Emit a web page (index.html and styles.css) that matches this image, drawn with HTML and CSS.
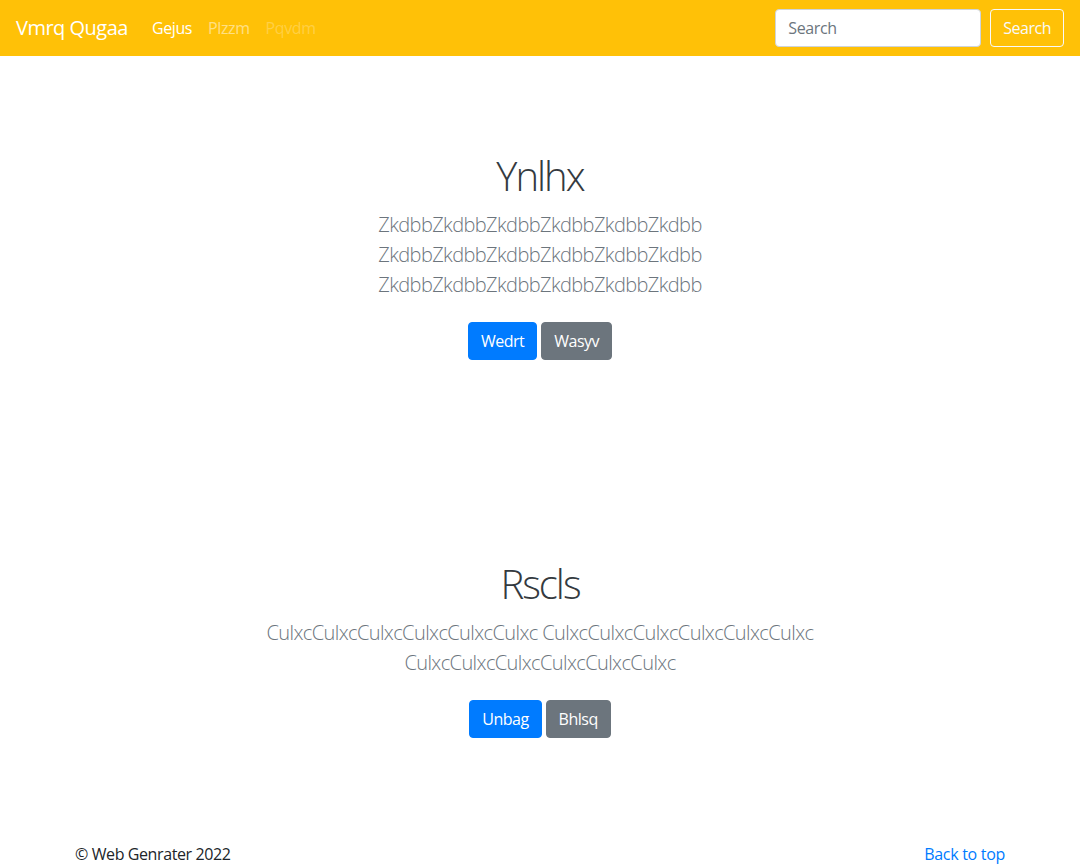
FILE: index.html
```html
<!DOCTYPE html>
<html lang="en">
<head>
<meta charset="utf-8">
<title>Vmrq Qugaa</title>
<link rel="stylesheet" href="styles.css">
</head>
<body>
<header class="navbar">
  <a class="brand" href="#">Vmrq Qugaa</a>
  <nav class="nav-links">
    <a class="nav-link active" href="#">Gejus</a>
    <a class="nav-link" href="#">Plzzm</a>
    <a class="nav-link disabled" href="#">Pqvdm</a>
  </nav>
  <form class="search-form">
    <input class="search-input" type="search" placeholder="Search">
    <button class="btn btn-outline-light" type="button">Search</button>
  </form>
</header>
<main>
  <section class="hero">
    <div class="hero-inner">
      <h1 class="hero-title">Ynlhx</h1>
      <p class="lead">ZkdbbZkdbbZkdbbZkdbbZkdbbZkdbb ZkdbbZkdbbZkdbbZkdbbZkdbbZkdbb ZkdbbZkdbbZkdbbZkdbbZkdbbZkdbb</p>
      <p class="actions">
        <a class="btn btn-primary" href="#">Wedrt</a>
        <a class="btn btn-secondary" href="#">Wasyv</a>
      </p>
    </div>
  </section>
  <section class="hero">
    <div class="hero-inner">
      <h1 class="hero-title">Rscls</h1>
      <p class="lead">CulxcCulxcCulxcCulxcCulxcCulxc CulxcCulxcCulxcCulxcCulxcCulxc CulxcCulxcCulxcCulxcCulxcCulxc</p>
      <p class="actions">
        <a class="btn btn-primary" href="#">Unbag</a>
        <a class="btn btn-secondary" href="#">Bhlsq</a>
      </p>
    </div>
  </section>
</main>
<footer class="footer">
  <div class="footer-inner">
    <span class="copy">© Web Genrater 2022</span>
    <a class="back" href="#">Back to top</a>
  </div>
</footer>
</body>
</html>
```
FILE: styles.css
```css
* { box-sizing: border-box; }
html, body { margin: 0; padding: 0; }
body {
  font-family: "Open Sans", "Noto Sans", "Liberation Sans", sans-serif;
  font-size: 16px;
  line-height: 1.5;
  letter-spacing: -0.4px;
  color: #212529;
  background: #fff;
}
a { text-decoration: none; }

.navbar {
  height: 56px;
  background: #ffc107;
  display: flex;
  align-items: center;
  padding: 0 16px;
}
.brand {
  color: #fff;
  font-size: 20px;
  line-height: 30px;
  letter-spacing: -0.5px;
  margin-right: 16px;
}
.nav-links { display: flex; flex: 1; }
.nav-link {
  padding: 8px;
  color: rgba(255,255,255,.5);
  font-size: 16px;
  line-height: 24px;
}
.nav-link.active { color: #fff; }
.nav-link.disabled { color: rgba(255,255,255,.25); }
.search-form { display: flex; align-items: center; gap: 9px; }
.search-input {
  width: 206px;
  height: 38px;
  padding: 6px 12px;
  font: inherit;
  font-size: 16px;
  letter-spacing: -0.4px;
  color: #495057;
  background: #fff;
  border: 1px solid #ced4da;
  border-radius: 4px;
  outline: none;
}
.search-input::placeholder { color: #6c757d; }

.btn {
  display: inline-block;
  font-family: inherit;
  font-size: 16px;
  line-height: 24px;
  letter-spacing: -0.5px;
  padding: 6px 12px;
  border: 1px solid transparent;
  border-radius: 4px;
  color: #fff;
  background: transparent;
  cursor: pointer;
}
.btn-outline-light { border-color: #f8f9fa; color: #f8f9fa; }
.btn-primary { background: #007bff; border-color: #007bff; }
.btn-secondary { background: #6c757d; border-color: #6c757d; }

.hero { padding: 96px 0; text-align: center; }
.hero-inner { max-width: 630px; margin: 0 auto; }
.hero-title {
  margin: 0 0 10px;
  font-size: 40px;
  font-weight: 300;
  line-height: 1.2;
  letter-spacing: -2px;
  color: #343a40;
}
.lead {
  margin: 0 0 14px;
  font-size: 20px;
  font-weight: 300;
  line-height: 30px;
  letter-spacing: -0.6px;
  color: #6c757d;
}
.actions { margin: 0; display: flex; justify-content: center; gap: 4px; }
.actions .btn { margin: 8px 0; }

.footer { padding: 0 0 48px; }
.footer-inner {
  max-width: 960px;
  margin: 0 auto;
  padding: 0 15px;
  display: flex;
  justify-content: space-between;
  line-height: 24px;
}
.copy { color: #212529; }
.back { color: #007bff; letter-spacing: -0.3px; }
```
